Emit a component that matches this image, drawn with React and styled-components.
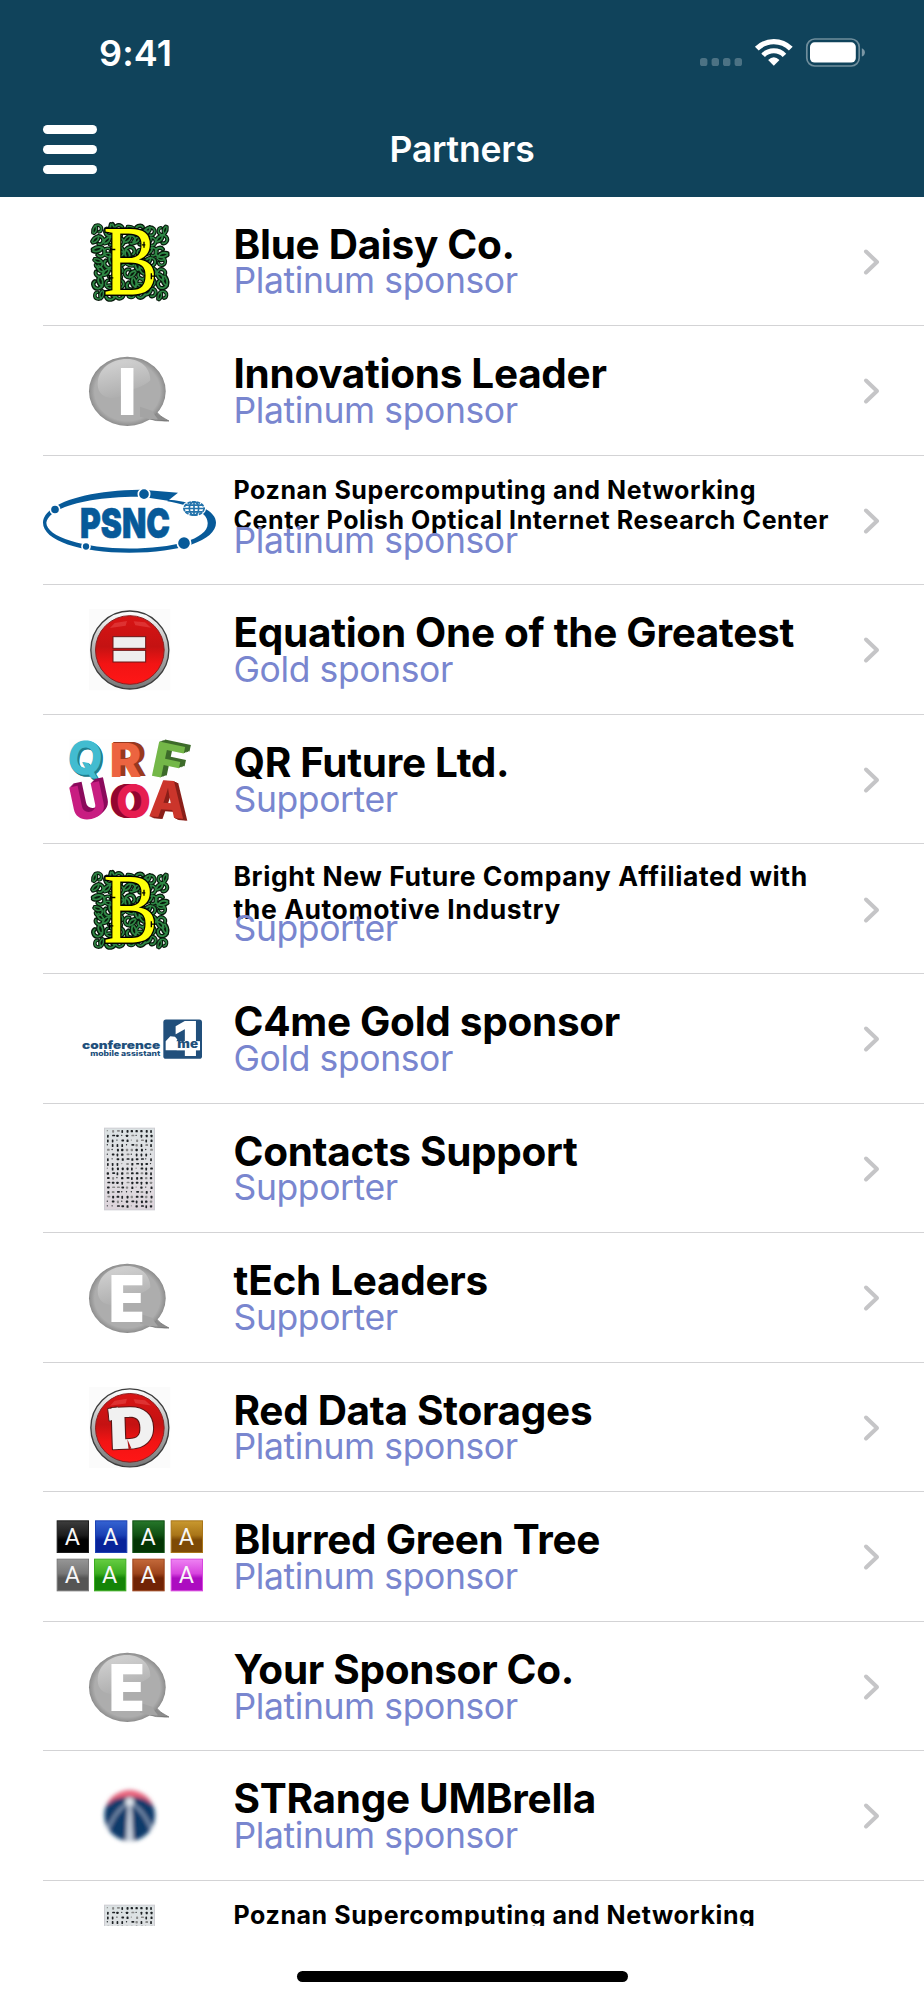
import React from "react";
import styled, { createGlobalStyle } from "styled-components";

const GlobalStyle = createGlobalStyle`
  body {
    margin: 0;
    background: #fff;
  }
`;

const Screen = styled.div`
  display: flex;
  flex-direction: column;
  width: 924px;
  height: 2000px;
  overflow: hidden;
  font-family: Inter, "Liberation Sans", sans-serif;
`;

const Header = styled.header`
  flex: none;
  height: 197px;
  background: #10435b;
  color: #fff;
`;

const StatusBar = styled.div`
  display: flex;
  justify-content: space-between;
  height: 104px;
  box-sizing: border-box;
  padding: 31px 58px 0 99px;
`;

const Time = styled.span`
  font-size: 36px;
  font-weight: 600;
  line-height: 44px;
  letter-spacing: 0.1px;
`;

const NavBar = styled.div`
  display: grid;
  grid-template-columns: 54px 1fr 54px;
  align-items: center;
  height: 91px;
  padding: 0 43px;
`;

const MenuButton = styled.button`
  display: flex;
  flex-direction: column;
  gap: 11px;
  padding: 0;
  border: 0;
  background: none;
`;

const MenuBar = styled.span`
  width: 54px;
  height: 9px;
  border-radius: 4.5px;
  background: #fff;
`;

const Heading = styled.h1`
  margin: 0;
  text-align: center;
  font-size: 35.5px;
  font-weight: 600;
  letter-spacing: -0.2px;
`;

const List = styled.ul`
  flex: none;
  height: 1729px;
  margin: 0;
  padding: 0;
  overflow: hidden;
  list-style: none;
`;

const Row = styled.li`
  display: flex;
  align-items: center;
  box-sizing: border-box;
  height: 129.56px;
  margin-left: 43px;
  padding: 1.6px 43px 0 0;
  border-bottom: 1px solid #d3d3d5;

  &:first-child {
    margin-top: -0.3px;
  }
`;

const LogoSvg = styled.svg`
  flex: none;
  width: 173px;
  height: 110px;
`;

const Info = styled.div`
  flex: 1;
  align-self: flex-start;
  padding: 17.2px 0 0 17.5px;
  white-space: nowrap;
`;

const Name = styled.div`
  display: flow-root;
  box-sizing: border-box;
  height: 45px;
  padding-top: ${({ $size }) => ($size ? 0 : 5.2)}px;
  color: #000;
  font-size: ${({ $size }) => $size || 40.5}px;
  font-weight: 700;
  line-height: ${({ $leading }) => $leading || 48}px;
  letter-spacing: ${({ $tracking }) => $tracking || -0.3}px;
`;

const NameLine = styled.div`
  &:first-child {
    margin-top: ${({ $lift }) => -($lift || 0)}px;
  }
`;

const Level = styled.div`
  position: relative;
  color: #7986cf;
  font-size: 35.5px;
  line-height: 42px;
  letter-spacing: -0.4px;
`;

const ChevronSvg = styled.svg`
  flex: none;
  width: 18px;
  height: 28px;
`;

const HomeArea = styled.footer`
  flex: 1;
  display: flex;
  justify-content: center;
  padding-top: 45px;
`;

const HomeIndicator = styled.div`
  width: 331px;
  height: 11px;
  border-radius: 6px;
  background: #000;
`;

const StatusSvg = styled.svg`
  margin-top: 5px;
`;

// All partner logos share one frame, centred vertically on `cy`
const Frame = ({ cy, children }) => (
  <LogoSvg viewBox={`39 ${cy - 165} 519 330`}>{children}</LogoSvg>
);

const vines = [];
for (let r = 0; r < 7; r++) {
  for (let c = 0; c < 7; c++) {
    const n = r * 37 + c * 53 + r * c * 19;
    vines.push({
      x: 206 + c * 31.5 + ((n % 5) - 2) * 1.5,
      y: 90 + r * 31.8 + ((n % 7) - 3) * 1.3,
      turn: (n % 12) * 30,
      grow: 0.9 + (n % 3) * 0.1
    });
  }
}
const VINE = "M-16 12C-18 -4 -8 -17 5 -13C17 -8 14 8 4 9M-8 -12C0 -4 -4 8 -12 14";

const IlluminatedB = () => (
  <Frame cy={184.5}>
    <g fill="none" strokeLinecap="round">
      {vines.map(({ x, y, turn, grow }) => (
        <path
          key={`${x}-${y}`}
          d={VINE}
          stroke="#07190b"
          strokeWidth="12"
          transform={`translate(${x} ${y}) rotate(${turn}) scale(${grow})`}
        />
      ))}
      {vines.map(({ x, y, turn, grow }) => (
        <path
          key={`${x}-${y}`}
          d={VINE}
          stroke="#2f8745"
          strokeWidth="5"
          transform={`translate(${x} ${y}) rotate(${turn}) scale(${grow})`}
        />
      ))}
    </g>
    <text
      x="220"
      y="281"
      fontFamily="Liberation Serif, serif"
      fontSize="300"
      textLength="164"
      lengthAdjust="spacingAndGlyphs"
      fill="#ffff0a"
      stroke="#000"
      strokeWidth="9"
      paintOrder="stroke"
    >
      B
    </text>
    <path
      d="M242 140v14M242 147h14M238 223v20M238 232h12M342 124v18M336 133h10M364 218v18M364 227h12"
      stroke="#000"
      strokeWidth="4"
    />
  </Frame>
);

const Bubble = ({ letter, x, width }) => (
  <Frame cy={573}>
    <defs>
      <radialGradient id="bubble" cx="0.5" cy="0.5" r="0.52">
        <stop offset="0.82" stopColor="#adadad" />
        <stop offset="0.94" stopColor="#929292" />
        <stop offset="1" stopColor="#606060" />
      </radialGradient>
      <linearGradient id="shine" x1="0" y1="0" x2="0.3" y2="1">
        <stop offset="0" stopColor="#e4e4e4" />
        <stop offset="1" stopColor="#b0b0b0" />
      </linearGradient>
    </defs>
    <path
      d="M340 652Q380 666 417 663Q389 650 378 634L352 630Z"
      fill="#8c8c8c"
      stroke="#666"
      strokeWidth="2"
    />
    <ellipse cx="292" cy="574" rx="115" ry="104" fill="url(#bubble)" />
    <path d="M330 650Q360 660 384 658Q374 646 366 632L330 620Z" fill="#a4a4a4" />
    <path
      d="M203 553C203 506 243 477 291 477C335 477 362 508 361 541C348 556 315 566 292 575C260 605 203 600 203 553Z"
      fill="url(#shine)"
      opacity="0.75"
    />
    <text
      x={x}
      y="646"
      textLength={width}
      lengthAdjust="spacingAndGlyphs"
      fontSize="192"
      fontWeight="900"
      fill="#fff"
    >
      {letter}
    </text>
  </Frame>
);

const PsncLogo = () => (
  <Frame cy={181.5}>
    <g fill="#075a99">
      <path d="M39 187C39 130 168 90 328 88L328 109C180 108 55 140 49 187C49 229 160 264 298 264C430 264 536 236 533 187C532 153 480 134 412 122L415 118C500 125 558 150 558 187C558 240 450 277 298 277C150 277 39 240 39 187Z" />
      <path d="M328 87L444 97L414 121L355 112L328 111Z" />
    </g>
    <g fill="#075a99" stroke="#fff" strokeWidth="5">
      <circle cx="342" cy="101" r="17" />
      <circle cx="75" cy="147" r="14" />
      <circle cx="168" cy="258" r="12" />
      <circle cx="462" cy="248" r="20" />
    </g>
    <ellipse cx="492" cy="144" rx="36" ry="25" fill="#fff" />
    <g fill="none" stroke="#2373ab" strokeWidth="5">
      <ellipse cx="492" cy="144" rx="30" ry="20" strokeDasharray="11 3" />
      <ellipse cx="492" cy="144" rx="14" ry="20" />
      <path d="M492 122v44M460 144h65M466 134h52M466 154h52" />
    </g>
    <text
      x="150"
      y="232"
      fontSize="124"
      fontWeight="900"
      textLength="270"
      lengthAdjust="spacingAndGlyphs"
      fill="#075a99"
      stroke="#075a99"
      strokeWidth="2"
    >
      PSNC
    </text>
  </Frame>
);

const RedButton = ({ id, children }) => (
  <>
    <defs>
      <linearGradient id={`${id}-rim`} x1="0" y1="0" x2="0" y2="1">
        <stop offset="0" stopColor="#fff" />
        <stop offset="0.5" stopColor="#b0b0b0" />
        <stop offset="1" stopColor="#777" />
      </linearGradient>
      <linearGradient id={`${id}-face`} x1="0" y1="0" x2="0" y2="1">
        <stop offset="0" stopColor="#d81414" />
        <stop offset="0.45" stopColor="#c41212" />
        <stop offset="0.7" stopColor="#f21414" />
        <stop offset="1" stopColor="#ff1616" />
      </linearGradient>
    </defs>
    <rect x="177" y="447" width="244" height="244" fill="#fbfbfb" />
    <circle
      cx="299.5"
      cy="570"
      r="117"
      fill={`url(#${id}-rim)`}
      stroke="#3c3c3c"
      strokeWidth="4"
    />
    <circle
      cx="299.5"
      cy="570"
      r="103"
      fill={`url(#${id}-face)`}
      stroke="#8b2020"
      strokeWidth="3"
    />
    <path
      d="M240 504l14-15 37-6-4 14zM311 484l34 3 18 16-47-7z"
      fill="#f06060"
      opacity="0.4"
    />
    {children}
  </>
);

const EqualsLogo = () => (
  <Frame cy={570}>
    <RedButton id="equals">
      <g fill="#eee" stroke="#6b1717" strokeWidth="3">
        <rect x="249" y="530" width="98" height="35" />
        <rect x="249" y="571" width="98" height="35" />
      </g>
    </RedButton>
  </Frame>
);

const DLogo = () => (
  <Frame cy={570.5}>
    <RedButton id="d">
      <path d="M233 512L262 507V548L237 550Z" fill="#f1f1f1" stroke="#5a1515" strokeWidth="3" />
      <text
        x="238"
        y="632"
        fontSize="170"
        fontWeight="900"
        textLength="138"
        lengthAdjust="spacingAndGlyphs"
        fill="#f1f1f1"
        stroke="#5a1515"
        strokeWidth="6"
        strokeLinejoin="round"
        paintOrder="stroke"
        transform="rotate(-2 300 570)"
      >
        D
      </text>
      <path d="M236 514L264 509V545L240 547Z" fill="#f1f1f1" />
      <path d="M292 604l4 32 8-5z" fill="#b01515" />
    </RedButton>
  </Frame>
);

const blocks = [
  { ch: "Q", x: 113, y: 192, w: 106, size: 138, dx: 7, dy: 5, turn: 8, face: "#42bcd0", side: "#1f7f8f" },
  { ch: "R", x: 238, y: 199, w: 97, size: 140, dx: 15, dy: -3, turn: 0, face: "#ec6440", side: "#97391f" },
  { ch: "F", x: 366, y: 205, w: 94, size: 144, dx: 16, dy: -10, turn: 12, face: "#74b748", side: "#3d6b2a" },
  { ch: "U", x: 120, y: 326, w: 108, size: 144, dx: 14, dy: -10, turn: -12, face: "#c81d81", side: "#8b0a5c" },
  { ch: "O", x: 257, y: 323, w: 106, size: 142, dx: -20, dy: 0, turn: 0, face: "#e61d50", side: "#93062f" },
  { ch: "A", x: 358, y: 322, w: 108, size: 152, dx: 13, dy: 5, turn: 4, face: "#cb352b", side: "#8a1f19" }
];
const DEPTHS = [1, 0.75, 0.5, 0.25];

const BlockLettersLogo = () => (
  <Frame cy={209}>
    <rect x="117" y="86" width="362" height="244" fill="#fefefe" />
    {blocks.map(({ ch, x, y, w, size, dx, dy, turn, face, side }) => (
      <g
        key={ch}
        fontSize={size}
        fontWeight="800"
        transform={`rotate(${turn} ${x + w / 2} ${y - 50})`}
      >
        {DEPTHS.map(d => (
          <text
            key={d}
            x={x + dx * d}
            y={y + dy * d}
            textLength={w}
            lengthAdjust="spacingAndGlyphs"
            fill={side}
          >
            {ch}
          </text>
        ))}
        <text
          x={x}
          y={y}
          textLength={w}
          lengthAdjust="spacingAndGlyphs"
          fill={face}
        >
          {ch}
        </text>
      </g>
    ))}
  </Frame>
);

const ConferenceLogo = () => (
  <Frame cy={176.5}>
    <rect x="400" y="118" width="116" height="118" rx="8" fill="#214f7b" />
    <path d="M407 210v-27l14-15 14 2 7 8-3 5h71v27z" fill="#fff" />
    <text
      x="430"
      y="229"
      fontSize="145"
      fontWeight="900"
      textLength="76"
      lengthAdjust="spacingAndGlyphs"
      fill="#fff"
    >
      1
    </text>
    <rect x="440" y="184" width="69" height="26" fill="#fff" />
    <g fill="#214f7b" fontWeight="900">
      <text x="442" y="205" fontSize="34" textLength="62" lengthAdjust="spacingAndGlyphs">
        me
      </text>
      <text x="156" y="207" fontSize="33" textLength="235" lengthAdjust="spacingAndGlyphs">
        conference
      </text>
      <text
        x="181"
        y="227"
        fontSize="21"
        fontWeight="800"
        textLength="210"
        lengthAdjust="spacingAndGlyphs"
      >
        mobile assistant
      </text>
    </g>
  </Frame>
);

const specks = [];
for (let r = 0; r < 17; r++) {
  for (let c = 0; c < 10; c++) {
    const n = (r * r * 31 + c * c * 17 + r * c * 7 + r * 5 + c * 3) % 23;
    specks.push({
      x: 230 + c * 14.4 + (n % 3),
      y: 448 + r * 14.1,
      w: 4 + (n % 6),
      h: 4 + ((n * 5) % 6),
      tone: n % 5 === 0 ? "#888" : "#1d2124"
    });
  }
}

const GridLogo = () => (
  <Frame cy={565}>
    <defs>
      <linearGradient id="sheet" x1="0" y1="0" x2="0" y2="1">
        <stop offset="0" stopColor="#dbe2e3" />
        <stop offset="0.6" stopColor="#e2dfe3" />
        <stop offset="1" stopColor="#dcd3da" />
      </linearGradient>
    </defs>
    <rect
      x="223.5"
      y="442.5"
      width="150"
      height="245"
      fill="url(#sheet)"
      stroke="#cdcdd2"
      strokeWidth="3"
    />
    {specks.map(({ x, y, w, h, tone }) => (
      <rect key={`${x}-${y}`} x={x} y={y} width={w} height={h} rx="2" fill={tone} />
    ))}
  </Frame>
);

const tiles = [
  { x: 80, y: 90, top: "#3d3d3d", mid: "#1c1c1c", low: "#020202" },
  { x: 195, y: 90, top: "#3563d2", mid: "#1b41b4", low: "#08239a" },
  { x: 307, y: 90, top: "#26772a", mid: "#0f4f12", low: "#033504" },
  { x: 422, y: 90, top: "#c9992f", mid: "#a97518", low: "#7e4a06" },
  { x: 80, y: 205, top: "#969696", mid: "#777", low: "#555" },
  { x: 192, y: 205, top: "#66cd42", mid: "#3bad1f", low: "#148407" },
  { x: 307, y: 205, top: "#c4693a", mid: "#9d441b", low: "#712305" },
  { x: 422, y: 205, top: "#ee82f2", mid: "#d845df", low: "#ac0cc0" }
];

const TilesLogo = () => (
  <Frame cy={200}>
    {tiles.map(({ x, y, top, mid, low }) => (
      <g key={`${x}-${y}`}>
        <linearGradient id={`tile-${x}-${y}`} x1="0" y1="0" x2="0" y2="1">
          <stop offset="0" stopColor={top} />
          <stop offset="0.45" stopColor={mid} />
          <stop offset="0.6" stopColor={low} />
          <stop offset="1" stopColor={low} />
        </linearGradient>
        <rect
          x={x + 1.5}
          y={y + 1.5}
          width="94"
          height="95"
          fill={`url(#tile-${x}-${y})`}
          stroke={mid}
          strokeWidth="3"
        />
        <text
          x={x + 47}
          y={y + 73}
          textAnchor="middle"
          fontFamily="Roboto, sans-serif"
          fontSize="70"
          fill="#f8f8f8"
        >
          A
        </text>
      </g>
    ))}
  </Frame>
);

const UmbrellaLogo = () => (
  <Frame cy={138.4}>
    <defs>
      <filter id="soft" x="-20%" y="-20%" width="140%" height="140%">
        <feGaussianBlur stdDeviation="6" />
      </filter>
      <clipPath id="ball">
        <circle cx="299" cy="137" r="76" />
      </clipPath>
    </defs>
    <g filter="url(#soft)">
      <g clipPath="url(#ball)">
        <rect x="220" y="58" width="160" height="156" fill="#0d3a6b" />
        <path d="M215 50H385V118L345 88Q299 72 253 88L215 118Z" fill="#f2647c" />
        <path
          d="M288 104Q256 124 234 178M310 104Q342 124 364 178"
          stroke="#8ea3bd"
          strokeWidth="7"
          fill="none"
        />
        <circle cx="299" cy="96" r="13" fill="#e4e8ee" />
        <path d="M294 106h10l6 110h-22z" fill="#c9d1de" />
      </g>
    </g>
  </Frame>
);

const Chevron = () => (
  <ChevronSvg viewBox="0 0 18 28" fill="none">
    <path
      d="M3 3.5L14 14L3 24.5"
      stroke="#c5c5c7"
      strokeWidth="4"
      strokeLinecap="round"
      strokeLinejoin="round"
    />
  </ChevronSvg>
);

const StatusIcons = () => (
  <StatusSvg width="167" height="32" viewBox="699 36 167 32">
    <g fill="#fff" opacity="0.25">
      <rect x="700" y="58" width="7.4" height="8" rx="2.6" />
      <rect x="711.6" y="58" width="7.4" height="8" rx="2.6" />
      <rect x="723" y="58" width="7.4" height="8" rx="2.6" />
      <rect x="734.6" y="58" width="7.4" height="8" rx="2.6" />
    </g>
    <g transform="translate(773.8 65.7) scale(0.3333)">
      <path d="M-51 -51A72 72 0 0 1 51 -51" stroke="#fff" strokeWidth="16" fill="none" />
      <path d="M-32 -31A44.5 44.5 0 0 1 32 -31" stroke="#fff" strokeWidth="15" fill="none" />
      <path d="M0 0L-17 -17Q0 -33 17 -17Z" fill="#fff" />
    </g>
    <rect
      x="806.8"
      y="39"
      width="52.4"
      height="27"
      rx="8"
      fill="none"
      stroke="#fff"
      strokeOpacity="0.4"
      strokeWidth="1.7"
    />
    <rect x="810" y="42.3" width="45.8" height="20.2" rx="4.6" fill="#fff" />
    <path d="M861.8 48.2Q864.9 49.5 864.9 52.4Q864.9 55.3 861.8 56.6Z" fill="#fff" opacity="0.45" />
  </StatusSvg>
);

const partners = [
  { name: "Blue Daisy Co.", level: "Platinum sponsor", logo: <IlluminatedB /> },
  {
    name: "Innovations Leader",
    level: "Platinum sponsor",
    logo: <Bubble letter="I" x="264" width="55" />
  },
  {
    name: "Poznan Supercomputing and Networking\nCenter Polish Optical Internet Research Center",
    level: "Platinum sponsor",
    logo: <PsncLogo />,
    size: 25,
    leading: 30.4,
    tracking: 0.6
  },
  { name: "Equation One of the Greatest", level: "Gold sponsor", logo: <EqualsLogo /> },
  { name: "QR Future Ltd.", level: "Supporter", logo: <BlockLettersLogo /> },
  {
    name: "Bright New Future Company Affiliated with\nthe Automotive Industry",
    level: "Supporter",
    logo: <IlluminatedB />,
    size: 26.5,
    leading: 32.4,
    tracking: 0.58,
    lift: 2.8
  },
  { name: "C4me Gold sponsor", level: "Gold sponsor", logo: <ConferenceLogo /> },
  { name: "Contacts Support", level: "Supporter", logo: <GridLogo /> },
  { name: "tEch Leaders", level: "Supporter", logo: <Bubble letter="E" x="236" width="108" /> },
  { name: "Red Data Storages", level: "Platinum sponsor", logo: <DLogo /> },
  { name: "Blurred Green Tree", level: "Platinum sponsor", logo: <TilesLogo /> },
  {
    name: "Your Sponsor Co.",
    level: "Platinum sponsor",
    logo: <Bubble letter="E" x="236" width="108" />
  },
  { name: "STRange UMBrella", level: "Platinum sponsor", logo: <UmbrellaLogo /> },
  {
    name: "Poznan Supercomputing and Networking",
    level: "",
    logo: <GridLogo />,
    size: 25,
    leading: 30.4,
    tracking: 0.58
  }
];

const App = () => (
  <Screen>
    <GlobalStyle />
    <Header>
      <StatusBar>
        <Time>9:41</Time>
        <StatusIcons />
      </StatusBar>
      <NavBar>
        <MenuButton aria-label="Menu">
          <MenuBar />
          <MenuBar />
          <MenuBar />
        </MenuButton>
        <Heading>Partners</Heading>
      </NavBar>
    </Header>
    <List>
      {partners.map(({ name, level, logo, size, leading, tracking, lift }, index) => (
        <Row key={index}>
          {logo}
          <Info>
            <Name $size={size} $leading={leading} $tracking={tracking}>
              {name.split("\n").map(line => (
                <NameLine key={line} $lift={lift}>
                  {line}
                </NameLine>
              ))}
            </Name>
            <Level>{level}</Level>
          </Info>
          <Chevron />
        </Row>
      ))}
    </List>
    <HomeArea>
      <HomeIndicator />
    </HomeArea>
  </Screen>
);

export default App;
